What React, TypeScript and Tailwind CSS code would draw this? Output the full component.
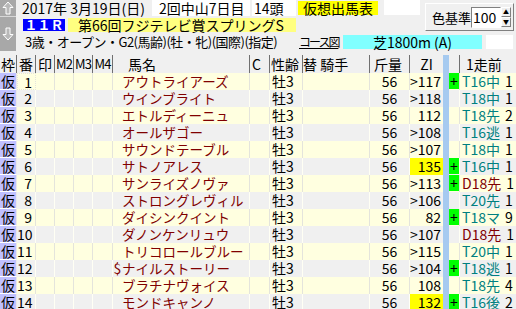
const rows = [
  { no: 1, name: "アウトライアーズ", zi: ">117", plus: true, prev: "T16中", rank: "1" },
  { no: 2, name: "ウインブライト", zi: ">118", plus: false, prev: "T18中", rank: "1" },
  { no: 3, name: "エトルディーニュ", zi: "112", plus: false, prev: "T18先", rank: "2" },
  { no: 4, name: "オールザゴー", zi: ">108", plus: false, prev: "T16逃", rank: "1" },
  { no: 5, name: "サウンドテーブル", zi: ">107", plus: false, prev: "T18中", rank: "1" },
  { no: 6, name: "サトノアレス", zi: "135", hi: true, plus: true, prev: "T16中", rank: "1" },
  { no: 7, name: "サンライズノヴァ", zi: ">113", plus: true, prev: "D18先", rank: "1" },
  { no: 8, name: "ストロングレヴィル", zi: ">106", plus: false, prev: "T20先", rank: "1" },
  { no: 9, name: "ダイシンクイント", zi: "82", plus: true, prev: "T18マ", rank: "9" },
  { no: 10, name: "ダノンケンリュウ", zi: ">107", plus: false, prev: "D18先", rank: "1" },
  { no: 11, name: "トリコロールブルー", zi: ">115", plus: false, prev: "T20中", rank: "1" },
  { no: 12, name: "ナイルストーリー", mark: "$", zi: ">104", plus: true, prev: "T18逃", rank: "1" },
  { no: 13, name: "ブラチナヴォイス", zi: "108", plus: false, prev: "T18先", rank: "4" },
  { no: 14, name: "モンドキャンノ", zi: "132", hi: true, plus: true, prev: "T16後", rank: "2" },
];

function Arrow({ down }: { down?: boolean }) {
  return (
    <svg width="12" height="14" viewBox="0 0 12 14" className={down ? "rotate-180" : ""}>
      <path d="M6 1 L11 6.5 L8 6.5 L8 13 L4 13 L4 6.5 L1 6.5 Z" fill="#b8b8b8" stroke="#ffffff" strokeWidth="1" />
    </svg>
  );
}

export default function App() {
  return (
    <div className="w-[516px] h-[309px] overflow-hidden whitespace-nowrap bg-[#f0f0f0] text-[14px] leading-[17px] text-black font-['Noto_Sans_CJK_JP',sans-serif]">
      {/* top info */}
      <div className="flex h-[55px]">
        <div className="flex w-[16px] shrink-0 flex-col">
          <div className="flex h-[17px] items-center justify-center bg-[#a8a8a8] border-b border-[#d8d8d8]">
            <Arrow />
          </div>
          <div className="flex h-[34px] items-center justify-center bg-[#a8a8a8]">
            <Arrow down />
          </div>
        </div>
        <div className="flex flex-1 flex-col pl-[6px]">
          <div className="flex">
            <div className="flex flex-col">
              <div className="flex h-[17px] items-start *:shrink-0">
                <span className="w-[130px] leading-[16px]">2017年 3月19日(日)</span>
                <span className="h-[16px] w-[98px] bg-white pl-[7px] leading-[16px]">2回中山7日目</span>
                <span className="ml-[2px] h-[16px] w-[44px] bg-white pl-[2px] leading-[16px]">14頭</span>
                <span className="ml-[2px] mt-[1px] h-[14px] w-[80px] bg-[#ffff00] pl-[5px] leading-[14px]">仮想出馬表</span>
                <span className="ml-[6px] h-[15px] w-[36px] bg-white" />
              </div>
              <div className="flex h-[16px] items-center *:shrink-0">
                <span className="ml-[1px] h-[12px] w-[42px] bg-[#0000ff] text-center text-[13px] font-bold leading-[12px] text-white">１１Ｒ</span>
                <span className="ml-[3px] h-[14px] w-[228px] bg-[#ffff80] pl-[10px] leading-[14px]">第66回フジテレビ賞スプリングS</span>
              </div>
            </div>
            <div className="ml-auto mr-[2px] mt-[3px] flex h-[28px] w-[89px] shrink-0 items-center border border-t-white border-l-white border-r-[#808080] border-b-[#808080] pl-[6px]">
              <span className="w-[39px] text-[13px]">色基準</span>
              <span className="flex h-[21px] w-[30px] items-center border border-t-[#808080] border-l-[#808080] border-r-white border-b-white bg-white pl-[1px] leading-[19px]">100</span>
              <div className="flex w-[10px] flex-col">
                <span className="flex h-[10px] items-center justify-center border border-t-white border-l-white border-r-[#808080] border-b-[#808080] text-[6px] leading-[6px]">▲</span>
                <span className="flex h-[10px] items-center justify-center border border-t-white border-l-white border-r-[#808080] border-b-[#808080] text-[6px] leading-[6px]">▼</span>
              </div>
            </div>
          </div>
          <div className="flex h-[17px] items-center *:shrink-0">
            <span className="ml-[3px] w-[274px] text-[13px] tracking-[-0.5px]">3歳・オープン・G2(馬齢)(牡・牝)(国際)(指定)</span>
            <span className="w-[44px] text-[12px] tracking-[-2px] underline">コース図</span>
            <span className="h-[14px] w-[139px] bg-[#80ffff] text-center leading-[14px]">芝1800m (A)</span>
            <span className="ml-[4px] h-[14px] w-[27px] bg-white" />
          </div>
        </div>
      </div>

      {/* header */}
      <div className="flex h-[18px] items-center text-[14px] leading-[18px] *:shrink-0">
        <span className="w-[17px] border-r border-[#707070] text-center">枠</span>
        <span className="w-[19px] border-r border-[#707070] text-center">番</span>
        <span className="w-[19px] border-r border-[#707070] text-center">印</span>
        <span className="w-[19px] border-r border-[#707070] text-center text-[13px] tracking-[-1px]">M2</span>
        <span className="w-[19px] border-r border-[#707070] text-center text-[13px] tracking-[-1px]">M3</span>
        <span className="w-[20px] border-r border-[#707070] text-center text-[13px] tracking-[-1px]">M4</span>
        <span className="w-[137px] border-r border-[#707070] pl-[15px]">馬名</span>
        <span className="w-[20px] border-r border-[#707070] pl-[2px]">C</span>
        <span className="w-[33px] border-r border-[#707070] pl-[1px]">性齢</span>
        <span className="w-[67px] border-r border-[#707070]">替 騎手</span>
        <span className="w-[40px] border-r border-[#707070] pl-[4px]">斤量</span>
        <span className="w-[33px] text-center">ZI</span>
        <span className="h-[18px] w-[6px] bg-[#a6caf0]" />
        <span className="h-[18px] w-[11px] border-r border-[#707070]" />
        <span className="w-[56px] pl-[6px]">1走前</span>
      </div>

      {/* rows */}
      {rows.map((r, i) => {
        const odd = i % 2 === 0;
        const line = odd ? "border-[#e4e4dc]" : "border-[#fffff4]";
        return (
          <div key={r.no} className={`flex h-[17px] leading-[17px] *:shrink-0 ${odd ? "bg-[#ffffe0]" : "bg-[#f0f0f0]"}`}>
            <span className="w-[17px] border-b border-r border-b-white border-r-[#e8e8e8] bg-[#c0c0ff] text-center">仮</span>
            <span
              className={`w-[19px] border-r pr-[3px] text-right ${line} ${
                r.no === 1 ? "border border-dotted border-[#c00000]" : ""
              }`}
            >
              {r.no}
            </span>
            <span className={`w-[19px] border-r ${line}`} />
            <span className={`w-[19px] border-r ${line}`} />
            <span className={`w-[19px] border-r ${line}`} />
            <span className={`w-[20px] border-r ${line}`} />
            <span className={`flex w-[137px] border-r text-[#800000] ${line}`}>
              <span className="w-[9px] text-center">{r.mark ?? ""}</span>
              <span className="text-[13.5px]">{r.name}</span>
            </span>
            <span className={`w-[20px] border-r ${line}`} />
            <span className={`w-[33px] border-r pl-[2px] ${line}`}>牡3</span>
            <span className={`w-[67px] border-r ${line}`} />
            <span className={`w-[40px] border-r text-center ${line}`}>56</span>
            <span className={`w-[33px] pr-[2px] text-right ${r.hi ? "bg-[#ffff00]" : ""}`}>{r.zi}</span>
            <span className="w-[6px] bg-[#a6caf0]" />
            <span className={`w-[11px] border-r ${line}`}>
              {r.plus && <span className="flex h-[16px] w-[10px] items-center justify-center bg-[#00ff00] leading-[16px]">+</span>}
            </span>
            <span className="w-[56px] pl-[2px]">
              <span className={r.prev.startsWith("D") ? "text-[#800000]" : "text-[#008080]"}>{r.prev}</span>
              <span className="ml-[5px]">{r.rank}</span>
            </span>
          </div>
        );
      })}
    </div>
  );
}
